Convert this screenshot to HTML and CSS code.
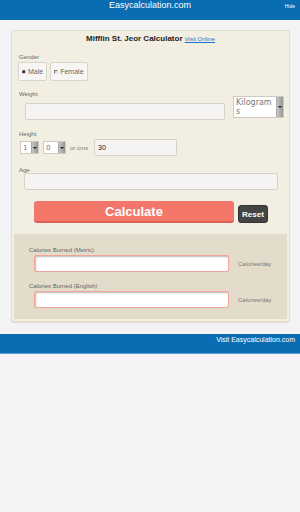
FILE: index.html
```html
<!DOCTYPE html>
<html lang="en">
<head>
    <meta charset="utf-8">
    <meta name="viewport" content="width=device-width, initial-scale=1.0">
    <title>Mifflin St. Jeor Calculator</title>
    <link rel="stylesheet" href="styles.css">
</head>
<body>
    <header class="topbar">
        <span class="site">Easycalculation.com</span>
        <span class="hide">Hide</span>
    </header>
    <main class="card">
        <h1 class="title">Mifflin St. Jeor Calculator <a href="#" class="visit">Visit Online</a></h1>

        <div class="label first">Gender</div>
        <div class="gender">
            <label class="radio"><span class="dot on"></span>Male</label>
            <label class="radio"><span class="dot"></span>Female</label>
        </div>

        <div class="label weight-label">Weight</div>
        <div class="weight">
            <div class="field weight-in"></div>
            <div class="select unit"><span class="txt">Kilograms</span><span class="arrow"></span></div>
        </div>

        <div class="label">Height</div>
        <div class="height">
            <div class="select small"><span class="txt">1</span><span class="arrow"></span></div>
            <div class="select small wide"><span class="txt">0</span><span class="arrow"></span></div>
            <span class="orcms">or cms</span>
            <div class="field cms">30</div>
        </div>

        <div class="label age-label">Age</div>
        <div class="field age"></div>

        <div class="actions">
            <button class="calc">Calculate</button>
            <button class="reset">Reset</button>
        </div>

        <section class="results">
            <div class="rlabel">Calories Burned (Metric)</div>
            <div class="rrow">
                <div class="out"></div>
                <span class="unit-txt">Calories/day</span>
            </div>
            <div class="rlabel">Calories Burned (English)</div>
            <div class="rrow">
                <div class="out"></div>
                <span class="unit-txt">Calories/day</span>
            </div>
        </section>
    </main>
    <footer class="bottombar">Visit Easycalculation.com</footer>
</body>
</html>
```

FILE: styles.css
```css
body {
    margin: 0;
    font-family: "Liberation Sans", Arial, sans-serif;
    background-color: #f3f2f5;
    color: #555;
}
.topbar {
    height: 20px;
    background-color: #0a6db3;
    color: white;
    display: flex;
    justify-content: center;
    position: relative;
}
.site {
    font-size: 9px;
    line-height: 11px;
}
.hide {
    position: absolute;
    right: 5px;
    top: 3px;
    font-size: 5px;
}
.card {
    margin: 10px 10px 0 11px;
    background-color: #f2eee1;
    border: 1px solid #e4dece;
    border-radius: 3px;
    padding: 3px 2px 2px 2px;
    box-shadow: 0 1px 1px #e0dcd0;
}
.title {
    margin: 0;
    text-align: center;
    font-size: 8px;
    font-weight: bold;
    color: #222;
    line-height: 10px;
}
.visit {
    font-size: 6px;
    font-weight: normal;
    color: #1a73d9;
}
.label {
    font-size: 6px;
    margin: 10px 0 0 5px;
    line-height: 8px;
    color: #666;
}
.label.first {
    margin-top: 9px;
}
.label.weight-label {
    margin-top: 9px;
}
.gender {
    display: flex;
    gap: 3px;
    margin: 1px 0 0 4px;
}
.radio {
    display: flex;
    align-items: center;
    gap: 2px;
    height: 17px;
    padding: 0 3px;
    font-size: 7px;
    color: #666;
    border: 1px solid #d9d5cc;
    border-radius: 2px;
    background-color: #f7f6f4;
}
.dot {
    width: 2px;
    height: 2px;
    border-radius: 50%;
    border: 1px solid #555;
    border-right-color: #ccc;
    border-bottom-color: #ddd;
    background: white;
}
.dot.on {
    background: #222;
}
.weight {
    display: flex;
    align-items: flex-start;
    margin: -2px 0 0 11px;
}
.field {
    background-color: #f5f4f2;
    border: 1px solid #d6d2ca;
    border-radius: 2px;
    box-sizing: border-box;
}
.weight-in {
    width: 200px;
    height: 17px;
    margin-top: 7px;
}
.select {
    display: flex;
    background: white;
    border: 1px solid #cfcbc3;
    box-sizing: border-box;
    font-family: "DejaVu Sans", sans-serif;
    color: #777;
}
.txt {
    flex: 1;
    min-width: 0;
    padding: 1px 0 0 2px;
    word-break: break-all;
}
.arrow {
    width: 6px;
    flex: none;
    background: linear-gradient(90deg, #c4c4c4, #969696);
    border-left: 1px solid #aaa;
    position: relative;
}
.arrow::after {
    content: "";
    position: absolute;
    left: 1px;
    top: 45%;
    border: 2px solid transparent;
    border-top-color: #222;
    border-bottom: none;
}
.unit {
    width: 51px;
    height: 22px;
    margin-left: 8px;
    font-size: 8px;
    line-height: 9px;
}
.unit .txt {
    padding-right: 4px;
}
.height {
    display: flex;
    align-items: center;
    gap: 4px;
    margin: 1px 0 0 6px;
}
.small {
    width: 19px;
    height: 13px;
    font-size: 7px;
    line-height: 10px;
}
.small.wide {
    width: 23px;
}
.orcms {
    font-size: 6px;
    color: #777;
    margin-right: 2px;
}
.cms {
    width: 83px;
    height: 17px;
    font-size: 7px;
    line-height: 15px;
    padding-left: 3px;
    color: #222;
}
.age-label {
    margin-top: 10px;
}
.age {
    width: 254px;
    height: 17px;
    margin: -1px 0 0 10px;
}
.actions {
    display: flex;
    align-items: flex-end;
    gap: 4px;
    margin: 11px 0 0 20px;
}
.calc {
    width: 200px;
    height: 22px;
    background-color: #f2776a;
    border: none;
    border-bottom: 2px solid #de5f53;
    border-radius: 3px;
    color: white;
    font-family: "Liberation Sans", Arial, sans-serif;
    font-weight: bold;
    font-size: 13px;
    padding: 0;
}
.reset {
    width: 30px;
    height: 18px;
    background-color: #444;
    border: 1px solid #333;
    border-radius: 3px;
    color: white;
    font-family: "Liberation Sans", Arial, sans-serif;
    font-weight: bold;
    font-size: 8px;
    padding: 0;
}
.results {
    margin-top: 11px;
    background-color: #e3dccb;
    padding: 12px 0 11px 0;
}
.rlabel {
    font-size: 6px;
    line-height: 8px;
    margin-left: 15px;
    color: #666;
}
.rrow {
    display: flex;
    align-items: center;
    margin: 1px 0 0 20px;
    gap: 9px;
}
.rrow + .rlabel {
    margin-top: 10px;
}
.out {
    width: 195px;
    height: 17px;
    box-sizing: border-box;
    background: white;
    border: 1px solid #f0a49a;
    border-radius: 2px;
    box-shadow: inset 1px 1px 2px #bbb;
}
.unit-txt {
    font-size: 6px;
    color: #777;
    margin-top: 1px;
}
.bottombar {
    margin-top: 12px;
    height: 20px;
    background-color: #0a6db3;
    border-bottom: 1px solid #5ea0d6;
    color: white;
    font-size: 7px;
    text-align: right;
    padding: 2px 5px 0 0;
    box-sizing: border-box;
}
```
